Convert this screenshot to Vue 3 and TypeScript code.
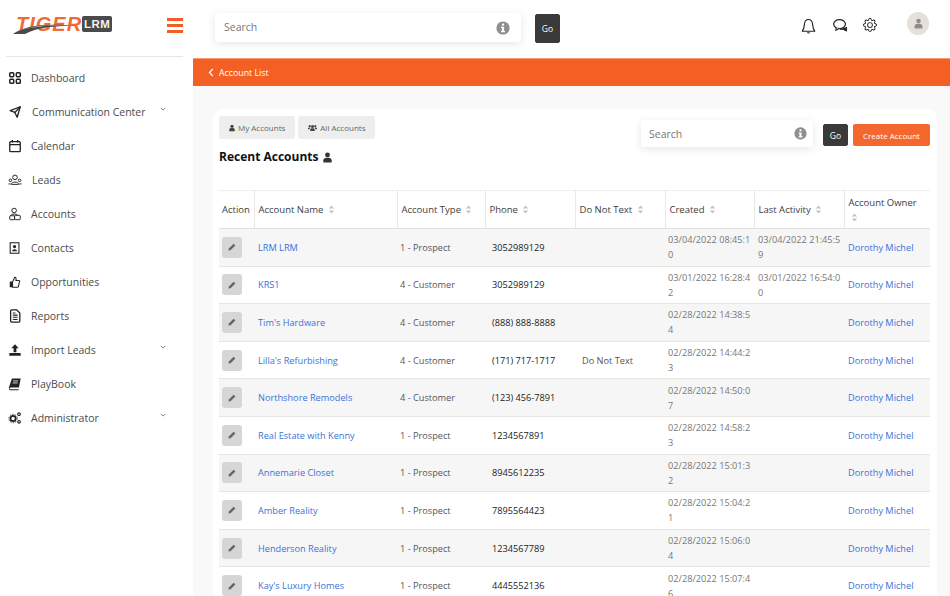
<script setup lang="ts">
interface NavItem { label: string; icon: string; caret?: boolean; wide?: boolean }
interface Row { name: string; type: string; phone: string; dnt?: string; created: string; last?: string }

const nav: NavItem[] = [
  { label: 'Dashboard', icon: 'dash' },
  { label: 'Communication Center', icon: 'send', caret: true, wide: true },
  { label: 'Calendar', icon: 'cal' },
  { label: 'Leads', icon: 'leads', wide: true },
  { label: 'Accounts', icon: 'acct' },
  { label: 'Contacts', icon: 'contact' },
  { label: 'Opportunities', icon: 'thumb' },
  { label: 'Reports', icon: 'report' },
  { label: 'Import Leads', icon: 'import', caret: true },
  { label: 'PlayBook', icon: 'book' },
  { label: 'Administrator', icon: 'cogs', caret: true },
]

const columns = [
  { label: 'Action', w: 35, sort: false },
  { label: 'Account Name', w: 143, sort: true },
  { label: 'Account Type', w: 88, sort: true },
  { label: 'Phone', w: 90, sort: true },
  { label: 'Do Not Text', w: 90, sort: true },
  { label: 'Created', w: 89, sort: true },
  { label: 'Last Activity', w: 90, sort: true },
  { label: 'Account Owner', w: 86, sort: true },
]

const rows: Row[] = [
  { name: 'LRM LRM', type: '1 - Prospect', phone: '3052989129', created: '03/04/2022 08:45:10', last: '03/04/2022 21:45:59' },
  { name: 'KRS1', type: '4 - Customer', phone: '3052989129', created: '03/01/2022 16:28:42', last: '03/01/2022 16:54:00' },
  { name: "Tim's Hardware", type: '4 - Customer', phone: '(888) 888-8888', created: '02/28/2022 14:38:54' },
  { name: "Lilla's Refurbishing", type: '4 - Customer', phone: '(171) 717-1717', dnt: 'Do Not Text', created: '02/28/2022 14:44:23' },
  { name: 'Northshore Remodels', type: '4 - Customer', phone: '(123) 456-7891', created: '02/28/2022 14:50:07' },
  { name: 'Real Estate with Kenny', type: '1 - Prospect', phone: '1234567891', created: '02/28/2022 14:58:23' },
  { name: 'Annemarie Closet', type: '1 - Prospect', phone: '8945612235', created: '02/28/2022 15:01:32' },
  { name: 'Amber Reality', type: '1 - Prospect', phone: '7895564423', created: '02/28/2022 15:04:21' },
  { name: 'Henderson Reality', type: '1 - Prospect', phone: '1234567789', created: '02/28/2022 15:06:04' },
  { name: "Kay's Luxury Homes", type: '1 - Prospect', phone: '4445552136', created: '02/28/2022 15:07:46' },
]
</script>

<template>
  <div class="app">
    <aside class="sidebar">
      <div class="brand">
        <div class="logo">
          <span class="tiger">TIGER</span>
          <span class="lrm">LRM</span>
          <svg class="swoosh" viewBox="0 0 70 18" width="70" height="18">
            <path d="M0 17 C12 9 30 6 64 9 C40 8.5 22 11 12 17 Z" fill="#4a4a4a" />
            <path d="M4 14.5 C18 8.5 40 7 64 9 C40 7.6 18 9 4 14.5 Z" fill="#fff" />
          </svg>
        </div>
        <button class="burger" aria-label="Menu"><i></i><i></i><i></i></button>
      </div>
      <nav class="nav">
        <a v-for="item in nav" :key="item.label" class="nav-item" :class="{ wide: item.wide }">
          <svg class="nav-icon" viewBox="0 0 16 16" width="14" height="14">
            <g v-if="item.icon === 'dash'" fill="none" stroke="#222" stroke-width="1.7">
              <rect x="2" y="2" width="4.5" height="4.5" rx="1" /><rect x="9.5" y="2" width="4.5" height="4.5" rx="1" />
              <rect x="2" y="9.5" width="4.5" height="4.5" rx="1" /><rect x="9.5" y="9.5" width="4.5" height="4.5" rx="1" />
            </g>
            <g v-else-if="item.icon === 'send'" fill="none" stroke="#222" stroke-width="1.5" stroke-linejoin="round">
              <path d="M2.5 6.5 L14 2 L10.5 14 L7.8 8.5 Z" /><path d="M7.8 8.5 L14 2" />
            </g>
            <g v-else-if="item.icon === 'cal'" fill="none" stroke="#222" stroke-width="1.5">
              <rect x="2" y="3" width="12" height="11.5" rx="1.2" /><path d="M2 6.5 H14 M5 1 V4 M11 1 V4" />
            </g>
            <g v-else-if="item.icon === 'leads'" fill="none" stroke="#222" stroke-width="1.1">
              <circle cx="8" cy="5" r="2.6" /><path d="M3.8 13 C4 9.5 12 9.5 12.2 13 Z" />
              <circle cx="2.8" cy="8.4" r="1.5" /><circle cx="13.2" cy="8.4" r="1.5" /><path d="M.5 12.5 H3 M13 12.5 H15.5" />
            </g>
            <g v-else-if="item.icon === 'acct'" fill="none" stroke="#222" stroke-width="1.1">
              <circle cx="7" cy="4" r="2.6" /><path d="M3 10 C3.5 7.5 10.5 7.5 11 9.5" />
              <rect x="2" y="10" width="5.5" height="4.5" rx=".8" /><rect x="7.5" y="9.5" width="6.5" height="5" rx=".8" />
            </g>
            <g v-else-if="item.icon === 'contact'">
              <rect x="2.5" y="2" width="10" height="12" fill="none" stroke="#222" stroke-width="1.2" />
              <circle cx="7.5" cy="6.4" r="1.8" fill="#222" /><path d="M4.6 11.8 C4.8 8.5 10.2 8.5 10.4 11.8 Z" fill="#222" />
            </g>
            <g v-else-if="item.icon === 'thumb'">
              <rect x="2" y="7.5" width="2.6" height="6.5" fill="#222" />
              <path d="M5.2 7.8 L7.8 2.5 C9.2 2.5 9.6 4 9 6.2 H12.4 C13.6 6.2 13.6 7.5 13 8.2 L11.9 13.2 C11.7 13.8 11.3 14 10.8 14 H5.2 Z" fill="none" stroke="#222" stroke-width="1.2" />
            </g>
            <g v-else-if="item.icon === 'report'">
              <path d="M3 2.2 C3 1.5 3.5 1 4.2 1 H10 L13.5 4.5 V13.8 C13.5 14.5 13 15 12.3 15 H4.2 C3.5 15 3 14.5 3 13.8 Z" fill="none" stroke="#222" stroke-width="1.5" />
              <path d="M5.5 7 H11 M5.5 9.5 H11 M5.5 12 H11 M5.5 4.5 H8.5" stroke="#222" stroke-width="1.2" />
            </g>
            <g v-else-if="item.icon === 'import'" fill="#222">
              <path d="M8 1.5 L12.2 6 H9.6 V10.5 H6.4 V6 H3.8 Z" /><rect x="1.5" y="11.5" width="13" height="3" rx=".6" />
            </g>
            <g v-else-if="item.icon === 'book'">
              <path d="M4.5 1.8 H14.5 L12.5 12 H3 C1.5 12 1.3 14 3 14 H12.3 L12 15 H2.6 C.9 15 .8 13 1.2 11.5 Z" fill="#222" />
              <path d="M5.8 4.5 H11.5 M5.3 6.8 H11" stroke="#fff" stroke-width=".9" />
            </g>
            <g v-else fill="none" stroke="#222">
              <circle cx="5.8" cy="8.6" r="3" stroke-width="2" /><circle cx="5.8" cy="8.6" r="4.8" stroke-width="1" stroke-dasharray="1.6 1.4" />
              <circle cx="12.6" cy="3.7" r="1.5" stroke-width="1.3" /><circle cx="12.6" cy="12.3" r="1.5" stroke-width="1.3" />
            </g>
          </svg>
          <span class="nav-label">{{ item.label }}</span>
          <svg v-if="item.caret" class="caret" viewBox="0 0 8 5" width="6" height="4">
            <path d="M1 1 L4 4 L7 1" fill="none" stroke="#555" stroke-width="1" />
          </svg>
        </a>
      </nav>
    </aside>

    <div class="content">
      <header class="topbar">
        <div class="search top-search">
          <span class="placeholder">Search</span>
          <svg class="info" viewBox="0 0 14 14" width="14" height="14">
            <circle cx="7" cy="7" r="6.6" fill="#8f8f8f" />
            <rect x="5.9" y="2.6" width="2.2" height="2" fill="#fff" />
            <path d="M5 5.8 H8.1 V10 H9 V11.3 H5 V10 H5.9 V7.1 H5 Z" fill="#fff" />
          </svg>
        </div>
        <button class="go top-go">Go</button>
        <div class="top-icons">
          <svg class="bell" viewBox="0 0 16 18" width="15" height="17">
            <path d="M8 1.5 C5 1.5 3.8 4 3.6 7 C3.4 10 3 12 1.3 14 H14.7 C13 12 12.6 10 12.4 7 C12.2 4 11 1.5 8 1.5 Z" fill="none" stroke="#222" stroke-width="1.2" stroke-linejoin="round" />
            <path d="M6.3 15 C6.5 17 9.5 17 9.7 15 Z" fill="#443" />
          </svg>
          <svg class="chat" viewBox="0 0 16 16" width="16" height="15">
            <path d="M15 9.5 L15 14 L11.5 12.2 L8 12" fill="#223" stroke="#223" stroke-width="1" />
            <ellipse cx="7.5" cy="6.5" rx="6.3" ry="4.8" fill="#fff" stroke="#222" stroke-width="1.3" />
            <path d="M4 10.5 L3.5 13 L7 11.2" fill="#fff" stroke="#222" stroke-width="1.1" />
          </svg>
          <svg class="gear" viewBox="0 0 16 16" width="14" height="14">
            <path d="M8 4.754a3.246 3.246 0 1 0 0 6.492 3.246 3.246 0 0 0 0-6.492zM5.754 8a2.246 2.246 0 1 1 4.492 0 2.246 2.246 0 0 1-4.492 0z" fill="#222" />
            <path d="M9.796 1.343c-.527-1.79-3.065-1.79-3.592 0l-.094.319a.873.873 0 0 1-1.255.52l-.292-.16c-1.64-.892-3.433.902-2.54 2.541l.159.292a.873.873 0 0 1-.52 1.255l-.319.094c-1.79.527-1.79 3.065 0 3.592l.319.094a.873.873 0 0 1 .52 1.255l-.16.292c-.892 1.64.901 3.434 2.541 2.54l.292-.159a.873.873 0 0 1 1.255.52l.094.319c.527 1.79 3.065 1.79 3.592 0l.094-.319a.873.873 0 0 1 1.255-.52l.292.16c1.64.893 3.434-.902 2.54-2.541l-.159-.292a.873.873 0 0 1 .52-1.255l.319-.094c1.79-.527 1.79-3.065 0-3.592l-.319-.094a.873.873 0 0 1-.52-1.255l.16-.292c.893-1.64-.902-3.433-2.541-2.54l-.292.159a.873.873 0 0 1-1.255-.52l-.094-.319zm-2.633.283c.246-.835 1.428-.835 1.674 0l.094.319a1.873 1.873 0 0 0 2.693 1.115l.291-.16c.764-.415 1.6.42 1.184 1.185l-.159.292a1.873 1.873 0 0 0 1.116 2.692l.318.094c.835.246.835 1.428 0 1.674l-.319.094a1.873 1.873 0 0 0-1.115 2.693l.16.291c.415.764-.42 1.6-1.185 1.184l-.291-.159a1.873 1.873 0 0 0-2.693 1.116l-.094.318c-.246.835-1.428.835-1.674 0l-.094-.319a1.873 1.873 0 0 0-2.692-1.115l-.292.16c-.764.415-1.6-.42-1.184-1.185l.159-.291A1.873 1.873 0 0 0 1.945 8.93l-.319-.094c-.835-.246-.835-1.428 0-1.674l.319-.094A1.873 1.873 0 0 0 3.06 4.377l-.16-.292c-.415-.764.42-1.6 1.185-1.184l.292.159a1.873 1.873 0 0 0 2.692-1.115l.094-.319z" fill="#222" />
          </svg>
          <div class="avatar">
            <svg viewBox="0 0 12 14" width="9" height="11">
              <circle cx="6" cy="3.6" r="3" fill="#8d8d8f" />
              <path d="M.8 13.5 V10.5 C.8 8 3.5 7.2 6 7.2 C8.5 7.2 11.2 8 11.2 10.5 V13.5 Z" fill="#8d8d8f" />
            </svg>
          </div>
        </div>
      </header>

      <div class="crumb">
        <svg viewBox="0 0 6 10" width="6" height="9"><path d="M5 1 L1.4 5 L5 9" fill="none" stroke="#fff" stroke-width="1.5" /></svg>
        <span>Account List</span>
      </div>

      <main class="main">
        <section class="card">
          <div class="card-head">
            <div class="head-left">
              <div class="tabs">
                <button class="tab">
                  <svg viewBox="0 0 12 14" width="6" height="8"><circle cx="6" cy="3.6" r="3.2" fill="#444" /><path d="M.5 13.5 V10.5 C.5 8 3.5 7.2 6 7.2 C8.5 7.2 11.5 8 11.5 10.5 V13.5 Z" fill="#444" /></svg>
                  My Accounts
                </button>
                <button class="tab">
                  <svg viewBox="0 0 18 14" width="9" height="8"><circle cx="9" cy="4" r="3" fill="#444" /><circle cx="3.4" cy="3.4" r="2.2" fill="#444" /><circle cx="14.6" cy="3.4" r="2.2" fill="#444" /><path d="M4.5 13 V10 C4.5 8 7 7.5 9 7.5 C11 7.5 13.5 8 13.5 10 V13 Z M0 9.5 V8 C0 6.6 1.8 6 3.4 6 L4.8 6.6 C3.8 7.4 3.2 8.4 3.2 9.5 Z M18 9.5 V8 C18 6.6 16.2 6 14.6 6 L13.2 6.6 C14.2 7.4 14.8 8.4 14.8 9.5 Z" fill="#444" /></svg>
                  All Accounts
                </button>
              </div>
              <h2 class="title">
                Recent Accounts
                <svg viewBox="0 0 12 14" width="9" height="11"><circle cx="6" cy="3.6" r="3.2" fill="#333" /><path d="M.5 13.5 V10.5 C.5 8 3.5 7.2 6 7.2 C8.5 7.2 11.5 8 11.5 10.5 V13.5 Z" fill="#333" /></svg>
              </h2>
            </div>
            <div class="head-right">
              <div class="search card-search">
                <span class="placeholder">Search</span>
                <svg class="info" viewBox="0 0 14 14" width="13" height="13">
                  <circle cx="7" cy="7" r="6.6" fill="#8f8f8f" />
                  <rect x="5.9" y="2.6" width="2.2" height="2" fill="#fff" />
                  <path d="M5 5.8 H8.1 V10 H9 V11.3 H5 V10 H5.9 V7.1 H5 Z" fill="#fff" />
                </svg>
              </div>
              <button class="go card-go">Go</button>
              <button class="create">Create Account</button>
            </div>
          </div>

          <table class="table">
            <colgroup>
              <col v-for="c in columns" :key="c.label" :style="{ width: c.w + 'px' }" />
            </colgroup>
            <thead>
              <tr>
                <th v-for="c in columns" :key="c.label">
                  {{ c.label }}
                  <svg v-if="c.sort" class="sort" viewBox="0 0 7 10" width="7" height="9">
                    <path d="M3.5 .5 L6.5 4 H.5 Z M3.5 9.5 L6.5 6 H.5 Z" fill="#c3c3c3" />
                  </svg>
                </th>
              </tr>
            </thead>
            <tbody>
              <tr v-for="r in rows" :key="r.name">
                <td class="act">
                  <span class="edit">
                    <svg viewBox="0 0 10 10" width="8" height="8"><path d="M7 .8 L9.2 3 L3.2 9 L.7 9.3 L1 6.8 Z" fill="#666" /></svg>
                  </span>
                </td>
                <td><a class="link">{{ r.name }}</a></td>
                <td class="type">{{ r.type }}</td>
                <td class="phone">{{ r.phone }}</td>
                <td class="dnt">{{ r.dnt }}</td>
                <td class="date">{{ r.created }}</td>
                <td class="date last">{{ r.last }}</td>
                <td><a class="link">Dorothy Michel</a></td>
              </tr>
            </tbody>
          </table>
        </section>
      </main>
    </div>
  </div>
</template>

<style>
html, body { margin: 0; padding: 0; height: 100%; overflow: hidden; background: #fff; }
</style>

<style scoped>
* { box-sizing: border-box; }
.app {
  display: flex;
  width: 950px;
  height: 596px;
  overflow: hidden;
  font-family: "Open Sans", "Noto Sans", sans-serif;
  color: #444;
}
.sidebar { width: 193px; flex: none; background: #fff; }
.brand {
  height: 57px;
  margin: 0 10px 0 6px;
  border-bottom: 1px solid #e6e6e6;
  display: flex;
  align-items: flex-start;
  justify-content: space-between;
  padding: 16px 0 0 10px;
}
.logo { position: relative; display: flex; align-items: center; height: 16px; }
.tiger {
  font-family: "Liberation Sans", sans-serif;
  font-size: 20px;
  line-height: 16px;
  font-weight: 700;
  font-style: italic;
  letter-spacing: 1px;
  color: #f26a35;
}
.lrm {
  background: #4a4a4a;
  color: #f2f2f2;
  font-family: "Liberation Sans", sans-serif;
  font-size: 11.5px;
  font-weight: 700;
  letter-spacing: .4px;
  line-height: 16px;
  height: 16px;
  width: 30px;
  text-align: center;
  border-radius: 2px;
}
.swoosh { position: absolute; left: -3px; top: 1px; }
.burger {
  width: 16px;
  height: 15px;
  margin-top: 2px;
  padding: 0;
  border: 0;
  background: none;
  display: flex;
  flex-direction: column;
  justify-content: space-between;
}
.burger i { display: block; height: 3px; background: #f15f25; }
.nav { padding-top: 4px; }
.nav-item {
  display: flex;
  align-items: center;
  height: 34px;
  padding-left: 8px;
  font-size: 10.5px;
  color: #4b4b4b;
  position: relative;
}
.nav-icon { flex: none; width: 14px; }
.nav-label { margin-left: 9px; }
.nav-item.wide .nav-label { margin-left: 10px; }
.caret { position: absolute; left: 160px; top: 12px; }
.content { flex: 1; min-width: 0; display: flex; flex-direction: column; background: #f9f9f9; }
.topbar {
  height: 58px;
  flex: none;
  background: #fff;
  display: flex;
  align-items: flex-start;
  padding-left: 22px;
}
.search {
  display: flex;
  align-items: center;
  justify-content: space-between;
  background: #fff;
  border-radius: 3px;
  box-shadow: 0 2px 8px rgba(0, 0, 0, .1);
}
.top-search { width: 306px; height: 29px; margin-top: 13px; padding: 0 11px 0 9px; }
.placeholder { font-size: 10.5px; color: #777; }
.top-search .placeholder { margin-top: -2px; }
.card-search .placeholder { margin-top: 1px; }
.go {
  border: 1px solid #3a3a3a;
  background: #3a3a38;
  color: #fff;
  font-family: inherit;
  font-size: 8.5px;
  padding: 0;
  border-radius: 2px;
}
.top-go { width: 25px; height: 29px; margin: 14px 0 0 14px; }
.top-icons { position: relative; flex: 1; height: 58px; }
.bell { position: absolute; left: 241px; top: 18px; }
.chat { position: absolute; left: 272px; top: 18px; }
.gear { position: absolute; left: 303px; top: 18px; }
.avatar {
  position: absolute;
  left: 347px;
  top: 12px;
  width: 22px;
  height: 23px;
  border-radius: 50%;
  background: #e6e0da;
  display: flex;
  align-items: center;
  justify-content: center;
}
.crumb {
  height: 28px;
  flex: none;
  background: #f46024;
  border-top: 1px solid #f89a73;
  color: #fff;
  font-size: 8.8px;
  display: flex;
  align-items: center;
  gap: 5px;
  padding-left: 15px;
}
.main { flex: 1; min-height: 0; padding: 23px 13px 0 20px; overflow: hidden; }
.card {
  background: #fff;
  border-radius: 10px 10px 0 0;
  padding: 7px 7px 0 6px;
  height: 600px;
}
.card-head { display: flex; justify-content: space-between; height: 74px; }
.tabs { display: flex; gap: 3px; }
.tab {
  height: 23px;
  padding: 0 10px;
  border: 0;
  border-radius: 3px;
  background: #eeeeee;
  color: #666;
  font-family: inherit;
  font-size: 8px;
  display: flex;
  align-items: center;
  gap: 3px;
}
.title {
  margin: 10px 0 0;
  font-size: 12px;
  line-height: 16px;
  font-weight: 700;
  color: #111;
  display: flex;
  align-items: center;
  gap: 5px;
}
.head-right { display: flex; align-items: flex-start; }
.card-search { width: 172px; height: 27px; margin-top: 4px; padding: 0 6px 0 8px; }
.card-go { width: 25px; height: 22px; margin: 8px 0 0 10px; }
.create {
  width: 77px;
  height: 22px;
  margin: 8px 0 0 5px;
  border: 0;
  border-radius: 2px;
  background: #f4682f;
  color: #fff;
  font-family: inherit;
  font-size: 8px;
  padding: 0;
}
.table {
  width: 711px;
  table-layout: fixed;
  border-collapse: collapse;
  font-size: 9.2px;
}
th {
  height: 38px;
  padding: 0 3px 0 4px;
  text-align: left;
  font-size: 9.5px;
  font-weight: 400;
  color: #3d3d3d;
  line-height: 15px;
  border-top: 1px solid #eee;
  border-bottom: 1px solid #e2e2e2;
  border-right: 1px solid #e8e8e8;
}
th:first-child { padding-left: 3px; }
th:last-child { border-right: 0; }
.sort { vertical-align: -1px; margin-left: 2px; }
td {
  height: 37.6px;
  padding: 0 4px;
  border-bottom: 1px solid #e8e4df;
  color: #555;
  line-height: 15px;
}
tbody tr:nth-child(odd) td { background: #f6f6f6; }
td.type { padding-left: 3px; }
td.phone { color: #222; padding-left: 7px; font-weight: 500; }
td.date { color: #777; word-break: break-all; padding: 0 2px 0 3px; }
td.date.last { padding-left: 4px; padding-right: 1px; }
td.dnt { padding-left: 7px; }
.link { color: #3a73d9; }
.act { padding: 0 3px; }
.edit {
  display: flex;
  align-items: center;
  justify-content: center;
  width: 20px;
  height: 21px;
  border-radius: 3px;
  background: #d6d6d6;
}
</style>
